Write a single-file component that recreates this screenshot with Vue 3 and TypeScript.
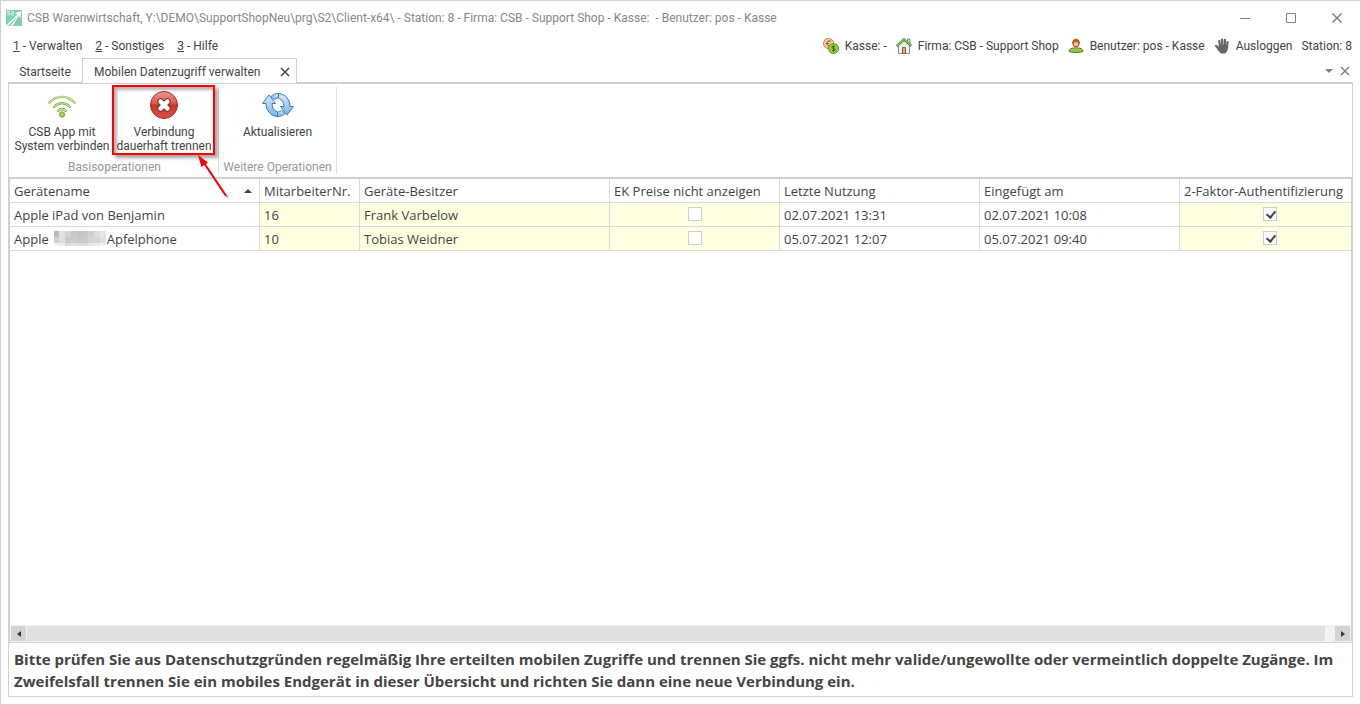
<script setup lang="ts">
import { ref } from 'vue'

interface Device {
  name: string
  redacted: boolean
  suffix: string
  employee: string
  owner: string
  hidePrices: boolean
  lastUse: string
  added: string
  twoFactor: boolean
}

const title =
  'CSB Warenwirtschaft, Y:\\DEMO\\SupportShopNeu\\prg\\S2\\Client-x64\\ - Station: 8 - Firma: CSB - Support Shop - Kasse:  - Benutzer: pos - Kasse'

const menus = [
  { key: '1', label: ' - Verwalten' },
  { key: '2', label: ' - Sonstiges' },
  { key: '3', label: ' - Hilfe' },
]

const mosaic = [
  '#bdbab2', '#e2e2e2', '#d4d4d8', '#c8c8c8', '#c4c4c6', '#c8c8c8', '#cfcfd2', '#dcdcde', '#e4e6ea',
  '#d2d0cc', '#dedede', '#c8c8cc', '#cdcdcd', '#c9c9cb', '#cbcbcb', '#d4d4d7', '#d6d6d9', '#dde1e6',
  '#f0f0f0', '#ececec', '#d9d9e0', '#e2e2e2', '#dcdcdc', '#dedee0', '#e6e6e6', '#eaeaea', '#f2f2f2',
]

const devices = ref<Device[]>([
  {
    name: 'Apple iPad von Benjamin', redacted: false, suffix: '', employee: '16', owner: 'Frank Varbelow',
    hidePrices: false, lastUse: '02.07.2021 13:31', added: '02.07.2021 10:08', twoFactor: true,
  },
  {
    name: 'Apple', redacted: true, suffix: 'Apfelphone', employee: '10', owner: 'Tobias Weidner',
    hidePrices: false, lastUse: '05.07.2021 12:07', added: '05.07.2021 09:40', twoFactor: true,
  },
])
</script>

<template>
  <div class="window">
    <header class="titlebar">
      <svg class="logo" viewBox="0 0 16 16" aria-hidden="true">
        <rect width="16" height="16" fill="#7fcfb0" />
        <path d="M0 15.500L11.500 4.500 9 3.200 15.500 1 14.500 8 12.800 6 6.500 16H0z" fill="#fff" />
        <path d="M2 16L12 5.500 4.500 16z" fill="#7fcfb0" />
        <path d="M4 1.500h-2.500v1.500h2v2h-2.500M5.500 1.500h2v1.500h-2v2h2.500" fill="none" stroke="#e2f5ed" stroke-width=".8" />
      </svg>
      <h1 class="title">{{ title }}</h1>
      <div class="controls">
        <button type="button" aria-label="Minimieren">
          <svg viewBox="0 0 12 12"><path d="M1 6.500h10" /></svg>
        </button>
        <button type="button" aria-label="Maximieren">
          <svg viewBox="0 0 12 12"><path d="M1.500 1.500h9v9h-9z" /></svg>
        </button>
        <button type="button" aria-label="Schließen">
          <svg viewBox="0 0 12 12"><path d="M1.500 1.500l9 9M10.500 1.500l-9 9" stroke-width="1.500" /></svg>
        </button>
      </div>
    </header>

    <nav class="menubar">
      <button v-for="m in menus" :key="m.key" type="button" class="menu"><u>{{ m.key }}</u>{{ m.label }}</button>
      <div class="status">
        <button type="button" class="stat">
          <svg viewBox="0 0 16 16" aria-hidden="true">
            <circle cx="5.500" cy="5.500" r="5" fill="#f5d3b3" stroke="#cf7a45" />
            <path d="M8 3.500a2.500 2.500 0 1 0 0 4M2.500 5.500h4" fill="none" stroke="#b9602c" stroke-width="1.200" />
            <circle cx="10.500" cy="10.500" r="5" fill="#9bd13c" stroke="#4f9221" />
            <path d="M12.300 8.800c-1-1-3.500-.8-3.400.5.100 1.400 3.300.9 3.300 2.400 0 1.400-2.600 1.300-3.500.4M10.500 7.300v6.500" fill="none" stroke="#28640f" />
          </svg>
          <span>Kasse: -</span>
        </button>
        <button type="button" class="stat">
          <svg viewBox="0 0 16 16" aria-hidden="true">
            <path d="M11.500 1h2.500v5h-2.500z" fill="#c9d8ef" stroke="#6d8cc2" />
            <path d="M2.500 7.500L8 2.500l5.500 5v8h-11z" fill="#eef4fd" stroke="#6d8cc2" />
            <path d="M.7 8L8 1.300 15.300 8" fill="none" stroke="#4f9a25" stroke-width="2.400" />
            <path d="M.9 7.600L8 1.200l7.100 6.400" fill="none" stroke="#a3dc5b" />
            <path d="M6.500 9.500h3v6h-3z" fill="#f2ab66" stroke="#b2561f" />
          </svg>
          <span>Firma: CSB - Support Shop</span>
        </button>
        <button type="button" class="stat">
          <svg viewBox="0 0 16 16" aria-hidden="true">
            <path d="M1 13.500c0-3 3-3.500 7-3.500s7 .5 7 3.500c-3 1.300-11 1.300-14 0z" fill="#92cf3d" stroke="#438522" />
            <path d="M6 8h4v3l-2 1.200L6 11z" fill="#d98f58" />
            <ellipse cx="8" cy="5" rx="3.200" ry="4" fill="#f3bd88" stroke="#a55a28" />
            <path d="M4.300 5.500C3.500 0 12.500 0 11.700 5.500L10.500 7C10.500 4.500 9 3.800 7.500 4 6.200 4.200 5.800 5 5.500 7z" fill="#ac6030" />
          </svg>
          <span>Benutzer: pos - Kasse</span>
        </button>
        <button type="button" class="stat">
          <svg viewBox="0 0 16 16" aria-hidden="true">
            <g fill="none" stroke="#666" stroke-width="2.200" stroke-linecap="round">
              <path d="M5.200 3L6.300 9M8 1.600L8.300 8.500M10.900 1.900L10.700 9M13.500 4L13 10M2 7.800l3.500 4.200" />
            </g>
            <path d="M5 7h9c.2 4-.5 6.500-2.800 8.500H7L3 11z" fill="#666" />
          </svg>
          <span>Ausloggen</span>
        </button>
        <span class="station">Station: 8</span>
      </div>
    </nav>

    <div class="tabs" role="tablist">
      <button type="button" role="tab" class="tab" aria-selected="false">Startseite</button>
      <div class="tab active">
        <button type="button" role="tab" aria-selected="true">Mobilen Datenzugriff verwalten</button>
        <button type="button" class="x" aria-label="Tab schließen">
          <svg viewBox="0 0 10 10"><path d="M1 1l8 8M9 1L1 9" /></svg>
        </button>
      </div>
      <div class="tabtools">
        <button type="button" aria-label="Tabliste"><svg viewBox="0 0 10 10"><path d="M1 3h8L5 7z" class="solid" /></svg></button>
        <button type="button" aria-label="Alle schließen"><svg viewBox="0 0 10 10"><path d="M1 1l8 8M9 1L1 9" /></svg></button>
      </div>
    </div>

    <main class="panel">
      <section class="ribbon">
        <div class="group base">
          <div class="tools">
            <button type="button" class="tool">
              <svg viewBox="0 0 32 32" aria-hidden="true">
                <g fill="none" stroke-linecap="round">
                  <path d="M3.500 13.500C10.500 6 21.500 6 28.500 13.500M8 18c5-5 11-5 16 0M12 22c2.500-2.500 5.500-2.500 8 0" stroke="#72a936" stroke-width="2.400" />
                  <path d="M3.500 13.500C10.500 6 21.500 6 28.500 13.500M8 18c5-5 11-5 16 0M12 22c2.500-2.500 5.500-2.500 8 0" stroke="#d2edb0" stroke-width="1.100" />
                </g>
                <circle cx="16" cy="25.500" r="2.700" fill="#a4cf6a" stroke="#72a936" />
              </svg>
              <span>CSB App mit<br />System verbinden</span>
            </button>
            <button type="button" class="tool marked">
              <svg viewBox="0 0 32 32" aria-hidden="true">
                <defs>
                  <linearGradient id="red" x1="0" y1="0" x2="0" y2="1">
                    <stop offset="0" stop-color="#e99b91" />
                    <stop offset=".45" stop-color="#d8564b" />
                    <stop offset=".5" stop-color="#c7362d" />
                    <stop offset="1" stop-color="#d95247" />
                  </linearGradient>
                </defs>
                <circle cx="16" cy="16" r="13.500" fill="url(#red)" stroke="#a92b24" />
                <path d="M12.500 12.500l7 7M19.500 12.500l-7 7" stroke="#8e2822" stroke-width="6.500" stroke-linecap="round" />
                <path d="M12.500 12.500l7 7M19.500 12.500l-7 7" stroke="#fff" stroke-width="4.500" stroke-linecap="round" />
              </svg>
              <span>Verbindung<br />dauerhaft trennen</span>
              <svg class="arrow" viewBox="0 0 40 50" aria-hidden="true">
                <path d="M10 12l21 31" stroke="#bbb" stroke-width="2" />
                <path d="M7 8l22 33" stroke="#f00" stroke-width="2" />
                <path d="M1 0l10 7.500L4.500 12z" fill="#f00" />
              </svg>
            </button>
          </div>
          <div class="caption">Basisoperationen</div>
        </div>
        <div class="group more">
          <div class="tools">
            <button type="button" class="tool">
              <svg viewBox="0 0 32 32" aria-hidden="true">
                <defs>
                  <linearGradient id="blue" x1="0" y1="0" x2="0" y2="1">
                    <stop offset="0" stop-color="#d6edfc" />
                    <stop offset="1" stop-color="#77b5e8" />
                  </linearGradient>
                </defs>
                <g fill="url(#blue)" stroke="#3f78b5" stroke-linejoin="round">
                  <path d="M.5 14.500L7 6l6.500 8.500H10c0 4 2 7 5.500 8.500v4.500C8.500 27 4 21.500 4 14.500z" />
                  <path d="M31.500 17.500L25 26l-6.500-8.500H22c0-4-2-7-5.500-8.500V4.500C23.500 5 28 10.500 28 17.500z" />
                  <path d="M9 7.500c2-2 4.500-3 7.500-3V9c-1.500 0-3 .5-4 1.500z" />
                  <path d="M23 24.500c-2 2-4.500 3-7.500 3V23c1.500 0 3-.5 4-1.500z" />
                </g>
              </svg>
              <span>Aktualisieren</span>
            </button>
          </div>
          <div class="caption">Weitere Operationen</div>
        </div>
      </section>

      <section class="grid">
        <div class="viewport">
          <table>
            <colgroup>
              <col class="c-name" /><col class="c-nr" /><col class="c-owner" /><col class="c-price" />
              <col class="c-date" /><col class="c-date" /><col class="c-auth" />
            </colgroup>
            <thead>
              <tr>
                <th scope="col" aria-sort="ascending"><div class="sorted">Gerätename<i></i></div></th>
                <th scope="col">MitarbeiterNr.</th>
                <th scope="col">Geräte-Besitzer</th>
                <th scope="col">EK Preise nicht anzeigen</th>
                <th scope="col">Letzte Nutzung</th>
                <th scope="col">Eingefügt am</th>
                <th scope="col">2-Faktor-Authentifizierung</th>
              </tr>
            </thead>
            <tbody>
              <tr v-for="d in devices" :key="d.employee">
                <td>
                  <div class="name">
                    <span>{{ d.name }}</span>
                    <span v-if="d.redacted" class="mosaic"><i v-for="(c, i) in mosaic" :key="i" :style="{ background: c }"></i></span>
                    <span v-if="d.suffix">{{ d.suffix }}</span>
                  </div>
                </td>
                <td class="edit">{{ d.employee }}</td>
                <td class="edit">{{ d.owner }}</td>
                <td class="edit check"><input v-model="d.hidePrices" type="checkbox" :aria-label="'EK Preise nicht anzeigen, ' + d.owner" /></td>
                <td>{{ d.lastUse }}</td>
                <td>{{ d.added }}</td>
                <td class="edit check"><input v-model="d.twoFactor" type="checkbox" :aria-label="'2-Faktor-Authentifizierung, ' + d.owner" /></td>
              </tr>
            </tbody>
          </table>
        </div>
        <div class="scroll">
          <button type="button" aria-label="Nach links"><svg viewBox="0 0 8 8"><path d="M6 1v6L2 4z" /></svg></button>
          <div class="track"><div class="thumb"></div></div>
          <button type="button" aria-label="Nach rechts"><svg viewBox="0 0 8 8"><path d="M2 1v6l4-3z" /></svg></button>
        </div>
      </section>

      <p class="hint">
        Bitte prüfen Sie aus Datenschutzgründen regelmäßig Ihre erteilten mobilen Zugriffe und trennen Sie ggfs. nicht
        mehr valide/ungewollte oder vermeintlich doppelte Zugänge. Im Zweifelsfall trennen Sie ein mobiles Endgerät in
        dieser Übersicht und richten Sie dann eine neue Verbindung ein.
      </p>
    </main>
  </div>
</template>

<style>
body {
  margin: 0;
  background: #fff;
}
</style>

<style scoped>
* {
  box-sizing: border-box;
}
.window {
  display: flex;
  flex-direction: column;
  height: 100vh;
  padding: 0 7px 7px;
  border: 1px solid #d0d0d0;
  background: #fff;
  color: #444;
  font: 12px/16px Roboto, 'Open Sans', sans-serif;
}
button {
  padding: 0;
  border: 0;
  background: none;
  color: inherit;
  font: inherit;
  white-space: nowrap;
}
svg {
  display: block;
  flex: none;
}
.titlebar {
  display: flex;
  align-items: center;
  height: 33px;
}
.logo {
  width: 16px;
  height: 16px;
  margin: 0 5px 0 -2px;
}
.title {
  flex: 1;
  margin: 0;
  color: #888;
  font-size: 12px;
  font-weight: 400;
  white-space: pre;
}
.controls {
  display: flex;
  margin-right: -7px;
}
.controls button {
  display: flex;
  align-items: center;
  justify-content: center;
  width: 46px;
  height: 32px;
}
.controls svg {
  width: 12px;
  height: 12px;
}
.controls path {
  fill: none;
  stroke: #808080;
}
.menubar {
  display: flex;
  align-items: center;
  gap: 13px;
  height: 24px;
  padding: 0 1px 0 5px;
}
.menu {
  white-space: pre;
}
.status {
  display: flex;
  gap: 9px;
  margin-left: auto;
}
.stat {
  display: flex;
  align-items: center;
  gap: 6px;
}
.stat svg {
  width: 16px;
  height: 16px;
}
.tabs {
  display: flex;
  align-items: stretch;
  height: 25px;
}
.tab {
  width: 74px;
  padding-top: 3px;
  border-bottom: 1px solid #d0d0d0;
}
.tab.active {
  display: flex;
  align-items: center;
  justify-content: space-between;
  width: 215px;
  padding: 1px 6px 0 11px;
  border: 1px solid #d0d0d0;
  border-bottom: 0;
}
.x svg,
.tabtools svg {
  width: 10px;
  height: 10px;
}
.x path,
.tabtools path {
  fill: none;
  stroke: #444;
  stroke-width: 1.5;
}
.tabtools {
  display: flex;
  flex: 1;
  align-items: center;
  justify-content: flex-end;
  gap: 6px;
  padding: 2px 3px 0 0;
  border-bottom: 1px solid #d0d0d0;
}
.tabtools path {
  stroke: #808080;
}
.tabtools path.solid {
  fill: #808080;
  stroke: none;
}
.panel {
  display: flex;
  flex: 1;
  flex-direction: column;
  min-height: 0;
  border: 1px solid #d0d0d0;
}
.ribbon {
  display: flex;
  height: 93px;
  padding: 3px 0;
}
.group {
  display: flex;
  flex-direction: column;
  justify-content: space-between;
  border-right: 1px solid #e0e0e0;
}
.base {
  width: 210px;
  padding-left: 2px;
}
.more {
  width: 118px;
}
.tools {
  display: flex;
}
.tool {
  position: relative;
  display: flex;
  flex: 0 0 102px;
  flex-direction: column;
  align-items: center;
  gap: 4px;
  padding-top: 2px;
  line-height: 14px;
}
.more .tool {
  flex: 1;
}
.tool > svg:first-child {
  width: 32px;
  height: 32px;
}
.marked::after {
  position: absolute;
  inset: -2px 0 -2px -1px;
  border: 2px solid #f00;
  box-shadow: 3px 3px 3px rgba(0, 0, 0, 0.35), inset 3px 3px 3px rgba(0, 0, 0, 0.3);
  content: '';
}
.tool .arrow {
  position: absolute;
  z-index: 1;
  top: 68px;
  left: 84px;
  width: 40px;
  height: 50px;
}
.caption {
  color: #999;
  text-align: center;
  white-space: nowrap;
  line-height: 14px;
}
.grid {
  display: flex;
  flex: 1;
  flex-direction: column;
  min-height: 0;
  border: 1px solid #d0d0d0;
  border-top-width: 2px;
}
.viewport {
  flex: 1;
  overflow: hidden;
}
table {
  width: 100%;
  min-width: 1350px;
  border-collapse: separate;
  border-spacing: 0;
  table-layout: fixed;
  font-family: 'Open Sans', 'Noto Sans', sans-serif;
  font-size: 13px;
  line-height: 18px;
}
.c-name {
  width: 250px;
}
.c-nr {
  width: 100px;
}
.c-owner {
  width: 250px;
}
.c-price {
  width: 170px;
}
.c-date {
  width: 200px;
}
.c-auth {
  width: 180px;
}
th,
td {
  height: 24px;
  padding: 0 0 0 4px;
  border-right: 1px solid #dadada;
  border-bottom: 1px solid #dadada;
  font-weight: 400;
  text-align: left;
  white-space: nowrap;
}
.edit {
  background: #ffffe1;
}
.check {
  padding: 0 0 2px;
}
.sorted {
  display: flex;
  align-items: center;
  justify-content: space-between;
  padding-right: 7px;
}
.sorted i {
  border: 4px solid transparent;
  border-top: 0;
  border-bottom-color: #444;
}
.name {
  display: flex;
  align-items: center;
}
.mosaic {
  display: grid;
  grid-template-columns: repeat(9, 1fr);
  grid-template-rows: 6px 6px 3px;
  width: 52px;
  margin: 0 1px 0 5px;
}
input {
  position: relative;
  display: block;
  width: 14px;
  height: 14px;
  margin: 0 auto;
  border: 1px solid #cfcfcf;
  background: #fff;
  appearance: none;
}
input:checked::after {
  position: absolute;
  top: 1px;
  left: 4px;
  width: 4px;
  height: 7px;
  border: solid #444;
  border-width: 0 2px 2px 0;
  content: '';
  transform: rotate(40deg);
}
.scroll {
  display: flex;
  height: 17px;
  padding: 1px;
  background: #f3f3f3;
}
.scroll button {
  display: flex;
  align-items: center;
  justify-content: center;
  width: 15px;
  background: #d3d3d3;
}
.scroll svg {
  width: 8px;
  height: 8px;
  fill: #333;
}
.track {
  flex: 1;
  padding: 0 10px 0 1px;
}
.thumb {
  height: 100%;
  background: #e0e0e0;
}
.hint {
  margin: 0;
  padding: 5px 5px 4px;
  font-family: 'Open Sans', 'Noto Sans', sans-serif;
  font-size: 15px;
  font-weight: 700;
  line-height: 22px;
}
</style>
